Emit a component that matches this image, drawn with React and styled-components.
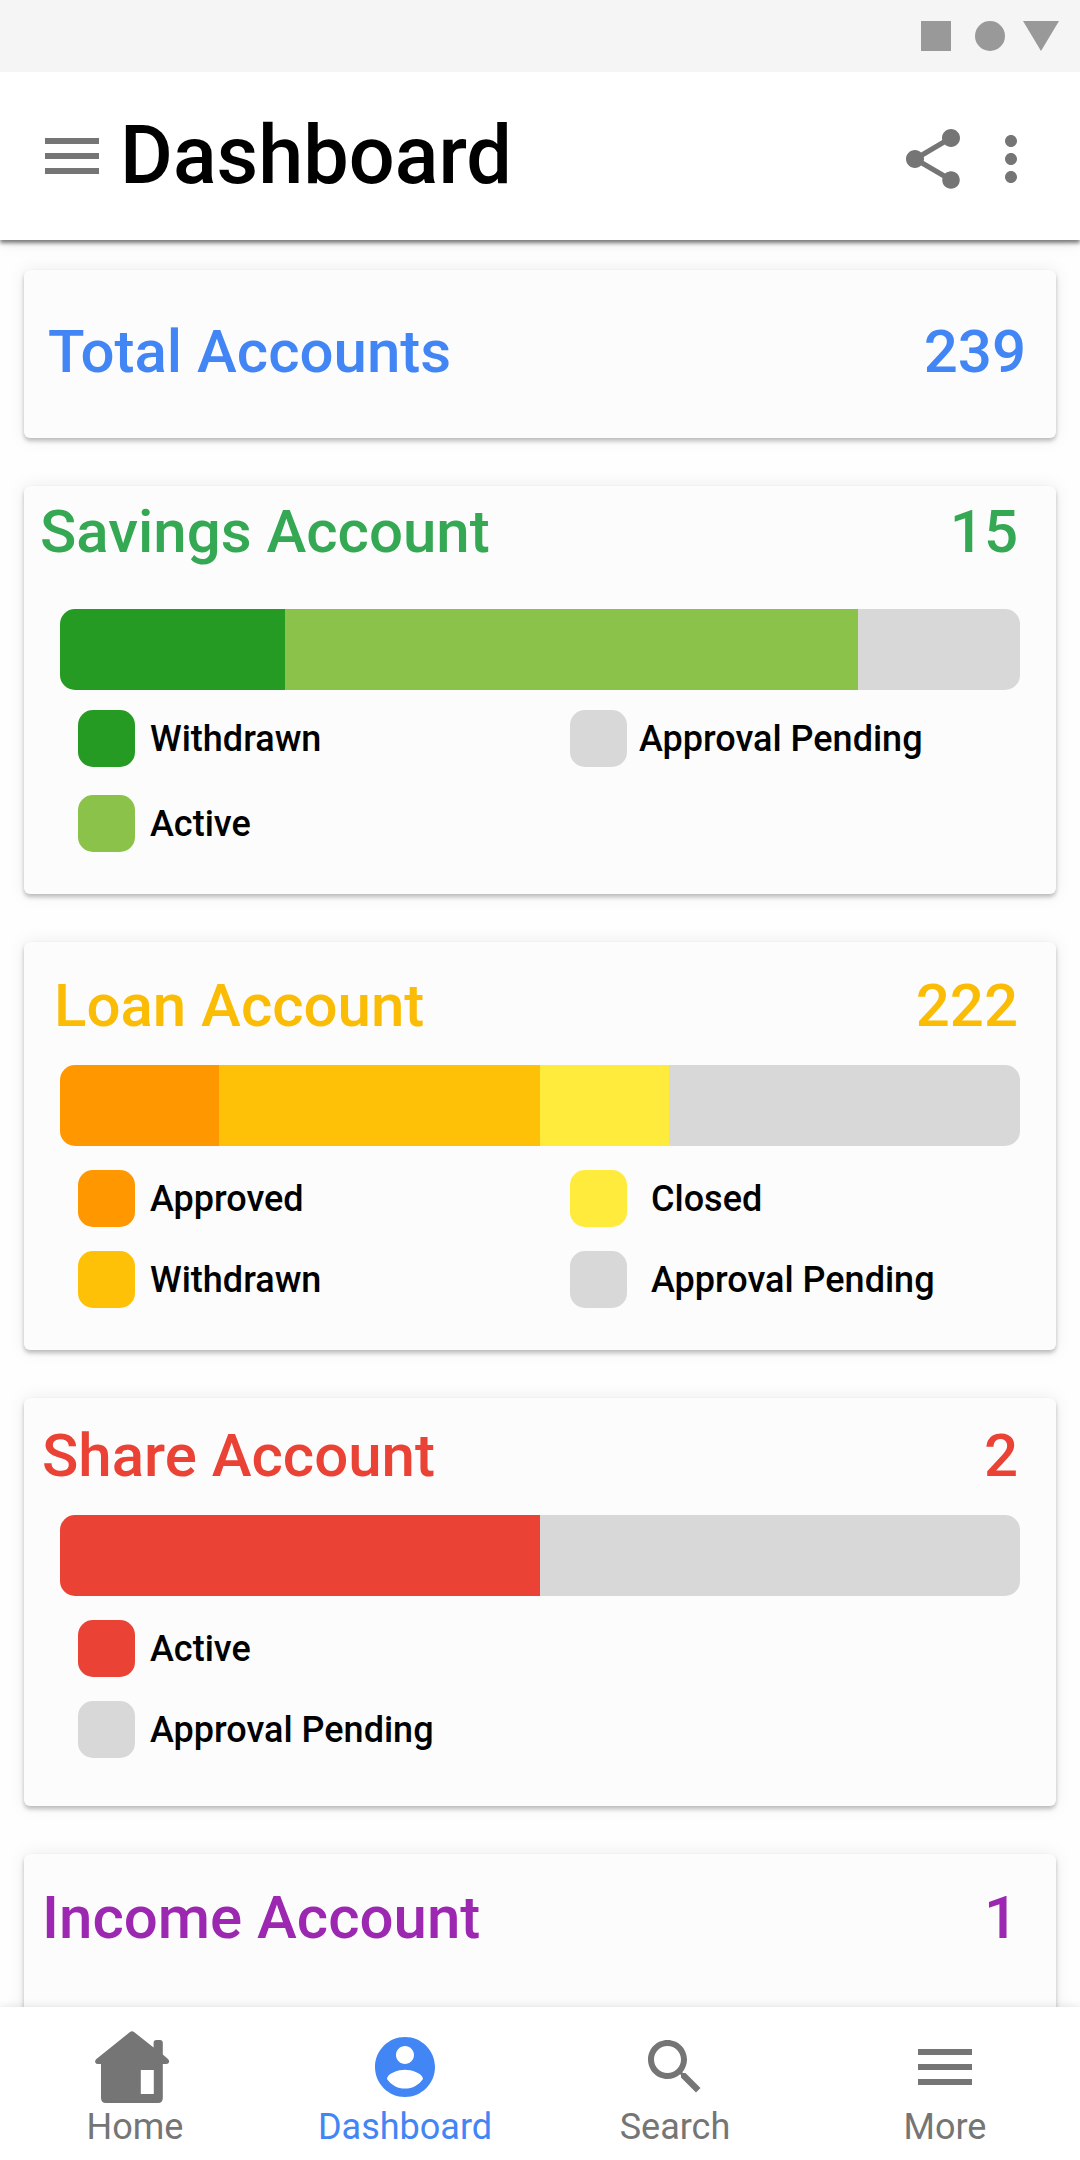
import React from 'react';
import styled, { createGlobalStyle } from 'styled-components';

const GREY = '#757575';
const PENDING = '#d8d8d8';

const GlobalStyle = createGlobalStyle`
  *, *::before, *::after { box-sizing: border-box; }
  body {
    margin: 0;
    background: #fefefe;
    color: #000;
    font-family: Roboto, "Noto Sans", sans-serif;
    -webkit-font-smoothing: antialiased;
  }
`;

const Screen = styled.div`
  display: flex;
  flex-direction: column;
  height: 100vh;
  overflow: hidden;
`;

const StatusBar = styled.div`
  flex: none;
  z-index: 2;
  display: flex;
  align-items: center;
  justify-content: flex-end;
  height: 72px;
  padding: 0 21px;
  background: #f5f5f5;
`;

const AppBar = styled.header`
  flex: none;
  z-index: 1;
  display: flex;
  align-items: center;
  gap: 12px;
  height: 168px;
  padding: 0 33px 0 36px;
  background: #fff;
  box-shadow: 0 3px 4px rgba(0, 0, 0, 0.5), 0 0 18px rgba(0, 0, 0, 0.1);
`;

const Title = styled.h1`
  flex: 1;
  margin: 0;
  font-size: 81px;
  line-height: 96px;
  font-weight: 500;
`;

const Actions = styled.div`
  display: flex;
  gap: 6px;
  padding-top: 6px;
`;

const IconButton = styled.button`
  display: block;
  padding: 0;
  border: 0;
  background: none;
  color: ${GREY};
  cursor: pointer;
`;

const Icon = styled.svg`
  display: block;
  width: 72px;
  height: 72px;
  fill: currentColor;
`;

const StatusIcons = styled.svg`
  display: block;
  width: 138px;
  height: 30px;
  fill: #999;
`;

const Content = styled.main`
  flex: 1;
  display: flex;
  flex-direction: column;
  gap: 48px;
  min-height: 0;
  padding: 30px 24px;
  overflow-y: auto;
  scrollbar-width: none;
`;

const Card = styled.section`
  flex: none;
  padding-top: ${(p) => p.$top}px;
  padding-bottom: ${(p) => p.$bottom}px;
  border-radius: 6px;
  background: #fcfcfc;
  box-shadow: 0 3px 4px rgba(0, 0, 0, 0.24), 0 0 18px rgba(0, 0, 0, 0.08);
`;

const CardHead = styled.div`
  display: flex;
  justify-content: space-between;
  padding-left: ${(p) => p.$left}px;
  padding-right: ${(p) => p.$right}px;
  color: ${(p) => p.$color};
  font-size: 60px;
  line-height: 72px;
  font-weight: 500;
`;

const CardTitle = styled.h2`
  margin: 0;
  font: inherit;
`;

const Bar = styled.div`
  display: flex;
  height: 81px;
  margin: ${(p) => p.$gap}px 36px 0;
  border-radius: 15px;
  overflow: hidden;
`;

const Segment = styled.div`
  flex: ${(p) => p.$share} 0 0;
  background: ${(p) => p.$color};
`;

const Legend = styled.ul`
  display: grid;
  grid-template-columns: 1fr 1fr;
  grid-auto-flow: column;
  grid-template-rows: repeat(2, 57px);
  gap: ${(p) => p.$rowGap}px 6px;
  margin: ${(p) => p.$top}px 0 0;
  padding: 0 0 0 54px;
  list-style: none;
`;

const LegendItem = styled.li`
  display: flex;
  align-items: center;
  gap: ${(p) => p.$gap}px;
  font-size: 36px;
  line-height: 48px;
  font-weight: 500;
`;

const Swatch = styled.span`
  flex: none;
  width: 57px;
  height: 57px;
  border-radius: 15px;
  background: ${(p) => p.$color};
`;

const BottomNav = styled.nav`
  flex: none;
  z-index: 1;
  display: grid;
  grid-template-columns: repeat(4, 1fr);
  padding: 24px 0 9px;
  background: #fff;
  box-shadow: 0 0 9px rgba(0, 0, 0, 0.12);
`;

const NavLink = styled.a`
  display: flex;
  flex-direction: column;
  align-items: center;
  color: ${(p) => (p.$active ? '#4285f4' : GREY)};
  font-size: 36px;
  line-height: 48px;
  text-decoration: none;
`;

const MenuIcon = () => (
  <Icon viewBox="0 0 24 24" aria-hidden="true">
    <path d="M3 18h18v-2H3v2zm0-5h18v-2H3v2zm0-7v2h18V6H3z" />
  </Icon>
);

const ShareIcon = () => (
  <Icon viewBox="0 0 24 24" aria-hidden="true">
    <path d="M18 16.08c-.76 0-1.44.3-1.96.77L8.91 12.7c.05-.23.09-.46.09-.7s-.04-.47-.09-.7l7.05-4.11c.54.5 1.25.81 2.04.81 1.66 0 3-1.34 3-3s-1.34-3-3-3-3 1.34-3 3c0 .24.04.47.09.7L8.04 9.81C7.5 9.31 6.79 9 6 9c-1.66 0-3 1.34-3 3s1.34 3 3 3c.79 0 1.5-.31 2.04-.81l7.12 4.16c-.05.21-.08.43-.08.65 0 1.61 1.31 2.92 2.92 2.92s2.92-1.31 2.92-2.92-1.31-2.92-2.92-2.92z" />
  </Icon>
);

const MoreVertIcon = () => (
  <Icon viewBox="0 0 24 24" aria-hidden="true">
    <path d="M12 8c1.1 0 2-.9 2-2s-.9-2-2-2-2 .9-2 2 .9 2 2 2zm0 2c-1.1 0-2 .9-2 2s.9 2 2 2 2-.9 2-2-.9-2-2-2zm0 6c-1.1 0-2 .9-2 2s.9 2 2 2 2-.9 2-2-.9-2-2-2z" />
  </Icon>
);

const HomeIcon = () => (
  <Icon viewBox="4 0 72 72" overflow="visible" aria-hidden="true">
    <path
      fillRule="evenodd"
      d="M35 1Q37 -.6 39 1L58.600 16.400V12Q58.600 9 61.400 9H65Q67.800 9 67.800 12V23.600L73 28Q75 30 73.600 32Q72.800 33 71 33H67.800V67Q67.800 72 63 72H11Q6 72 6 67V33H3Q1 33 .3 31.500Q-.4 29.600 1.400 28ZM45.800 39V63H58.800V39Z"
    />
  </Icon>
);

const AccountIcon = () => (
  <Icon viewBox="0 0 24 24" aria-hidden="true">
    <path d="M12 2C6.48 2 2 6.48 2 12s4.48 10 10 10 10-4.48 10-10S17.52 2 12 2zm0 3c1.66 0 3 1.34 3 3s-1.34 3-3 3-3-1.34-3-3 1.34-3 3-3zm0 14.2c-2.5 0-4.71-1.28-6-3.22.03-1.99 4-3.08 6-3.08 1.99 0 5.97 1.09 6 3.08-1.29 1.94-3.5 3.22-6 3.22z" />
  </Icon>
);

const SearchIcon = () => (
  <Icon viewBox="0 0 24 24" aria-hidden="true">
    <path d="M15.5 14h-.79l-.28-.27C15.41 12.59 16 11.11 16 9.5 16 5.91 13.09 3 9.5 3S3 5.91 3 9.5 5.91 16 9.5 16c1.61 0 3.09-.59 4.23-1.57l.27.28v.79l5 4.99L20.49 19l-4.99-5zm-6 0C7.01 14 5 11.99 5 9.5S7.01 5 9.5 5 14 7.01 14 9.5 11.99 14 9.5 14z" />
  </Icon>
);

const accounts = [
  { title: 'Total Accounts', count: 239, color: '#4285f4', top: 46, bottom: 50, left: 24, right: 30 },
  {
    title: 'Savings Account', count: 15, color: '#34a853', top: 10, bottom: 42, left: 16, right: 38,
    barGap: 41, legendTop: 20, rowGap: 28,
    segments: [
      { label: 'Withdrawn', color: '#259b24', share: 225, gap: 15 },
      { label: 'Active', color: '#8bc34a', share: 573, gap: 15 },
      { label: 'Approval Pending', color: PENDING, share: 162, gap: 12 },
    ],
  },
  {
    title: 'Loan Account', count: 222, color: '#fbbc05', top: 28, bottom: 42, left: 30, right: 38,
    barGap: 23, legendTop: 24, rowGap: 24,
    segments: [
      { label: 'Approved', color: '#ff9800', share: 159, gap: 15 },
      { label: 'Withdrawn', color: '#ffc107', share: 321, gap: 15 },
      { label: 'Closed', color: '#ffeb3b', share: 129, gap: 24 },
      { label: 'Approval Pending', color: PENDING, share: 351, gap: 24 },
    ],
  },
  {
    title: 'Share Account', count: 2, color: '#ea4335', top: 22, bottom: 48, left: 18, right: 38,
    barGap: 23, legendTop: 24, rowGap: 24,
    segments: [
      { label: 'Active', color: '#ea4335', share: 480, gap: 15 },
      { label: 'Approval Pending', color: PENDING, share: 480, gap: 15 },
    ],
  },
  { title: 'Income Account', count: 1, color: '#9c27b0', top: 28, bottom: 68, left: 18, right: 38 },
];

const links = [
  { label: 'Home', icon: HomeIcon },
  { label: 'Dashboard', icon: AccountIcon, active: true },
  { label: 'Search', icon: SearchIcon },
  { label: 'More', icon: MenuIcon },
];

function AccountCard({ account }) {
  const { title, count, color, top, bottom, left, right, segments } = account;
  return (
    <Card $top={top} $bottom={bottom}>
      <CardHead $left={left} $right={right} $color={color}>
        <CardTitle>{title}</CardTitle>
        <span>{count}</span>
      </CardHead>
      {segments && (
        <>
          <Bar $gap={account.barGap}>
            {segments.map((s) => (
              <Segment key={s.label} $share={s.share} $color={s.color} />
            ))}
          </Bar>
          <Legend $top={account.legendTop} $rowGap={account.rowGap}>
            {segments.map((s) => (
              <LegendItem key={s.label} $gap={s.gap}>
                <Swatch $color={s.color} />
                {s.label}
              </LegendItem>
            ))}
          </Legend>
        </>
      )}
    </Card>
  );
}

export default function App() {
  return (
    <Screen>
      <GlobalStyle />
      <StatusBar>
        <StatusIcons viewBox="0 0 138 30" aria-hidden="true">
          <rect width="30" height="30" />
          <circle cx="69" cy="15" r="15" />
          <path d="M102 0h36l-18 30z" />
        </StatusIcons>
      </StatusBar>
      <AppBar>
        <IconButton type="button" aria-label="Menu"><MenuIcon /></IconButton>
        <Title>Dashboard</Title>
        <Actions>
          <IconButton type="button" aria-label="Share"><ShareIcon /></IconButton>
          <IconButton type="button" aria-label="More options"><MoreVertIcon /></IconButton>
        </Actions>
      </AppBar>
      <Content>
        {accounts.map((a) => (
          <AccountCard key={a.title} account={a} />
        ))}
      </Content>
      <BottomNav>
        {links.map(({ label, icon: Glyph, active }) => (
          <NavLink key={label} href="#" $active={active} aria-current={active ? 'page' : undefined}>
            <Glyph />
            {label}
          </NavLink>
        ))}
      </BottomNav>
    </Screen>
  );
}
